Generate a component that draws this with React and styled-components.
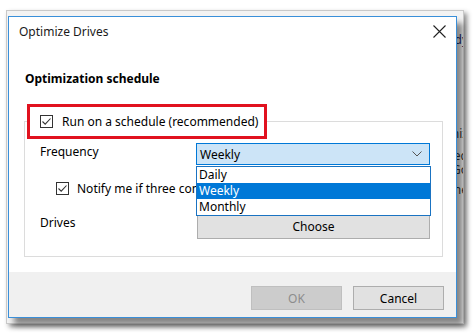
import styled, { createGlobalStyle } from "styled-components";

const GlobalStyle = createGlobalStyle`
  html, body {
    margin: 0;
    padding: 0;
    background: #ffffff;
  }
  body {
    font-family: "Noto Sans", "Open Sans", sans-serif;
    font-size: 12px;
    color: #000;
  }
`;

const Stage = styled.div`
  position: relative;
  width: 474px;
  height: 335px;
  overflow: hidden;
  background: #ffffff;
`;

const BackWindow = styled.div`
  position: absolute;
  left: 6px;
  top: 10px;
  width: 456px;
  height: 312px;
  background: #f3f3f3;
  border: 1px solid #c9c9c9;
  box-shadow: 3px 3px 5px rgba(0, 0, 0, 0.45);
  display: flex;
  flex-direction: column;
  align-items: flex-end;
  overflow: hidden;
`;

const BackLine = styled.div`
  margin-top: ${(p) => p.$top}px;
  margin-right: -5px;
  font-size: 12px;
  line-height: 14px;
  color: ${(p) => p.$color || "#333"};
  white-space: nowrap;
`;

const Dialog = styled.div`
  position: absolute;
  left: 8px;
  top: 16px;
  width: 447px;
  height: 300px;
  background: #ffffff;
  border: 1px solid #3a8fd9;
  box-shadow: 6px 7px 6px rgba(0, 0, 0, 0.45);
  display: flex;
  flex-direction: column;
`;

const TitleBar = styled.div`
  height: 29px;
  flex-shrink: 0;
  padding: 0 10px 0 10px;
  display: flex;
  align-items: center;
  justify-content: space-between;
`;

const Title = styled.span`
  font-size: 12px;
  color: #1a1a1a;
`;

const CloseButton = styled.div`
  width: 14px;
  height: 14px;
  display: flex;
  align-items: center;
  justify-content: center;
`;

const Body = styled.div`
  flex: 1;
  min-height: 0;
  padding: 0 13px 0 15px;
  display: flex;
  flex-direction: column;
`;

const Heading = styled.div`
  font-weight: 700;
  font-size: 12px;
  margin: 25px 0 0 1px;
  line-height: 16px;
`;

const Group = styled.fieldset`
  margin: 17px 0 0 0;
  padding: 4px 0 17px 0;
  border: 1px solid #dcdcdc;
  min-width: 0;
  position: relative;
`;

const Legend = styled.legend`
  margin-left: 2px;
  padding: 0 6px 0 10px;
  height: 29px;
  border: 3px solid #e1121f;
  display: flex;
  align-items: center;
  gap: 9px;
`;

const Grid = styled.div`
  display: grid;
  grid-template-columns: 156px 234px;
  align-items: start;
  padding-left: 15px;
`;

const Label = styled.div`
  line-height: 16px;
  margin-top: ${(p) => p.$top || 1}px;
`;

const Select = styled.div`
  height: 20px;
  border: 1px solid #0078d7;
  background: #cce4f7;
  display: flex;
  align-items: center;
  justify-content: space-between;
  padding: 0 7px 0 3px;
  position: relative;
`;

const DropList = styled.div`
  position: absolute;
  left: -1px;
  top: 22px;
  width: 233px;
  background: #ffffff;
  border: 1px solid #1a73c2;
  z-index: 2;
`;

const Option = styled.div`
  height: 16px;
  line-height: 16px;
  padding-left: 2px;
  background: ${(p) => (p.$active ? "#0078d7" : "transparent")};
  color: ${(p) => (p.$active ? "#ffffff" : "#000000")};
`;

const CheckRow = styled.div`
  grid-column: 1 / 3;
  display: flex;
  align-items: center;
  gap: 8px;
  margin: 17px 0 0 16px;
  height: 13px;
  white-space: nowrap;
`;

const Button = styled.div`
  height: ${(p) => p.$h || 24}px;
  border: 1px solid ${(p) => (p.$disabled ? "#bfbfbf" : "#adadad")};
  background: ${(p) => (p.$disabled ? "#cccccc" : "#e1e1e1")};
  color: ${(p) => (p.$disabled ? "#8c8c8c" : "#000000")};
  display: flex;
  align-items: center;
  justify-content: center;
  box-sizing: border-box;
  width: ${(p) => (p.$w ? `${p.$w}px` : "auto")};
`;

const ChooseWrap = styled.div`
  margin-top: 18px;
  margin-left: 1px;
`;

const Footer = styled.div`
  height: 45px;
  flex-shrink: 0;
  background: #f0f0f0;
  display: flex;
  justify-content: flex-end;
  align-items: flex-start;
  gap: 11px;
  padding: 14px 12px 0 0;
  box-sizing: border-box;
`;

const Check = () => (
  <svg width="13" height="13" viewBox="0 0 13 13">
    <rect x="0.5" y="0.5" width="12" height="12" fill="#fff" stroke="#333" />
    <path d="M2.5 6.5 L5.2 9.2 L10.5 3.5" fill="none" stroke="#333" strokeWidth="1.1" />
  </svg>
);

export default function App() {
  return (
    <Stage>
      <GlobalStyle />
      <BackWindow>
        <BackLine $top={22} $color="#1d2b6b">Ready</BackLine>
        <BackLine $top={80}>Optimiz</BackLine>
        <BackLine $top={8}>Needed</BackLine>
        <BackLine $top={0}>Go</BackLine>
        <BackLine $top={6}>Done</BackLine>
      </BackWindow>
      <Dialog>
        <TitleBar>
          <Title>Optimize Drives</Title>
          <CloseButton>
            <svg width="13" height="13" viewBox="0 0 13 13">
              <path d="M0.5 0.5 L12.5 12.5 M12.5 0.5 L0.5 12.5" stroke="#222" strokeWidth="1.1" />
            </svg>
          </CloseButton>
        </TitleBar>
        <Body>
          <Heading>Optimization schedule</Heading>
          <Group>
            <Legend>
              <Check />
              <span>Run on a schedule (recommended)</span>
            </Legend>
            <Grid>
              <Label>Frequency</Label>
              <Select>
                <span>Weekly</span>
                <svg width="10" height="6" viewBox="0 0 10 6">
                  <path d="M0.5 0.5 L5 5 L9.5 0.5" fill="none" stroke="#555" strokeWidth="1" />
                </svg>
                <DropList>
                  <Option>Daily</Option>
                  <Option $active>Weekly</Option>
                  <Option>Monthly</Option>
                </DropList>
              </Select>
              <CheckRow>
                <Check />
                <span>Notify me if three consecutive scheduled runs are missed</span>
              </CheckRow>
              <Label $top={20}>Drives</Label>
              <ChooseWrap>
                <Button $h={26}>Choose</Button>
              </ChooseWrap>
            </Grid>
          </Group>
        </Body>
        <Footer>
          <Button $disabled $w={91}>OK</Button>
          <Button $w={91}>Cancel</Button>
        </Footer>
      </Dialog>
    </Stage>
  );
}
